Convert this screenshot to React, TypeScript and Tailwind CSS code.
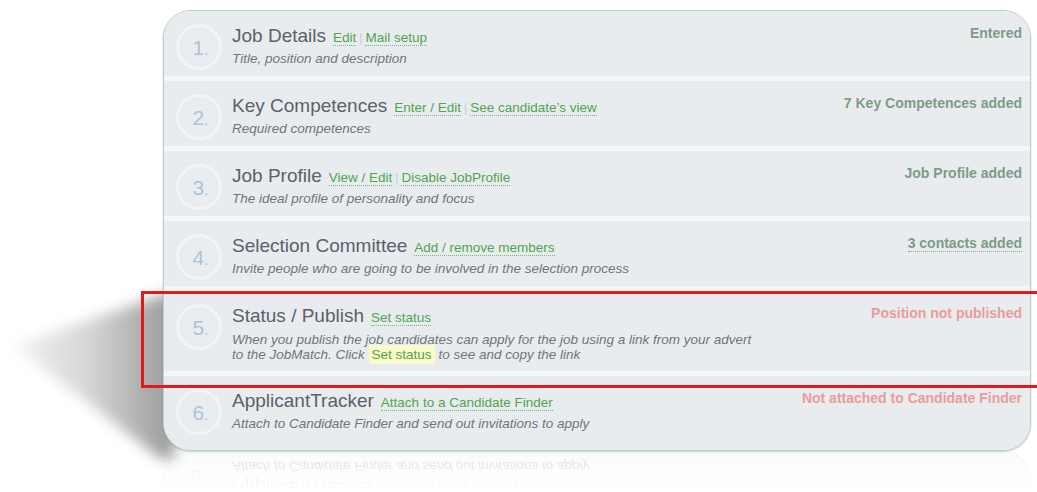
import React from "react";

type Step = {
  n: number;
  title: string;
  links: string[];
  desc?: string;
  status: string;
  tone: "ok" | "bad";
  statusLink?: boolean;
  tall?: boolean;
};

const steps: Step[] = [
  {
    n: 1,
    title: "Job Details",
    links: ["Edit", "Mail setup"],
    desc: "Title, position and description",
    status: "Entered",
    tone: "ok",
  },
  {
    n: 2,
    title: "Key Competences",
    links: ["Enter / Edit", "See candidate’s view"],
    desc: "Required competences",
    status: "7 Key Competences added",
    tone: "ok",
  },
  {
    n: 3,
    title: "Job Profile",
    links: ["View / Edit", "Disable JobProfile"],
    desc: "The ideal profile of personality and focus",
    status: "Job Profile added",
    tone: "ok",
  },
  {
    n: 4,
    title: "Selection Committee",
    links: ["Add / remove members"],
    desc: "Invite people who are going to be involved in the selection process",
    status: "3 contacts added",
    tone: "ok",
    statusLink: true,
  },
  {
    n: 5,
    title: "Status / Publish",
    links: ["Set status"],
    status: "Position not published",
    tone: "bad",
    tall: true,
  },
  {
    n: 6,
    title: "ApplicantTracker",
    links: ["Attach to a Candidate Finder"],
    desc: "Attach to Candidate Finder and send out invitations to apply",
    status: "Not attached to Candidate Finder",
    tone: "bad",
  },
];

function StepLink({ children }: { children: React.ReactNode }) {
  return (
    <a className="text-[#4fa54f] border-b border-dotted border-[#74b974] leading-[14px] cursor-pointer">
      {children}
    </a>
  );
}

function NumberBadge({ n }: { n: number }) {
  return (
    <div className="mt-[13px] ml-[12px] w-[46px] h-[46px] shrink-0 rounded-full border-[3px] border-[#f2f4f6] bg-[#eaedf0] flex items-center justify-center">
      <span className="text-[21px] leading-none text-[#aec3d9] pl-[3px]">
        {n}
        <span className="text-[16px]">.</span>
      </span>
    </div>
  );
}

function StepBody({ step }: { step: Step }) {
  return (
    <div className="flex-1 pl-[10px] pt-[14px]">
      <div className="flex items-baseline">
        <span className="text-[19px] leading-[22px] text-[#5a616b]">{step.title}</span>
        <span className="ml-[7px] text-[13.5px]">
          {step.links.map((l, i) => (
            <React.Fragment key={l}>
              {i > 0 && <span className="mx-[3px] text-[#c3ccd4] text-[12px]">|</span>}
              <StepLink>{l}</StepLink>
            </React.Fragment>
          ))}
        </span>
      </div>
      {step.tall ? (
        <p className="mt-[4px] text-[13.5px] leading-[15px] italic text-[#6f757d]">
          When you publish the job candidates can apply for the job using a link from your advert
          <br />
          to the JobMatch. Click{" "}
          <span className="not-italic bg-[#fbfaca] px-[3px] py-[2px] text-[#4fa54f]">Set status</span>{" "}
          to see and copy the link
        </p>
      ) : (
        <p className="mt-[3px] text-[13.5px] leading-[16px] italic text-[#6f757d]">{step.desc}</p>
      )}
    </div>
  );
}

function StepRow({ step }: { step: Step }) {
  const color = step.tone === "ok" ? "text-[#7c9c88]" : "text-[#e89c9c]";
  const height = step.tall ? "h-[80px]" : step.n === 6 ? "h-[74px]" : "h-[65px]";
  return (
    <div className={`flex bg-[#e9ecef] ${height}`}>
      <NumberBadge n={step.n} />
      <StepBody step={step} />
      <div className={`pt-[12px] pr-[8px] text-[14px] leading-[20px] font-bold whitespace-nowrap ${color}`}>
        {step.statusLink ? (
          <span className="border-b border-dotted border-[#8aa995]">{step.status}</span>
        ) : (
          step.status
        )}
      </div>
    </div>
  );
}

export default function App() {
  const last = steps[steps.length - 1];
  return (
    <div
      className="relative w-[1037px] h-[492px] overflow-hidden bg-white"
      style={{ fontFamily: '"Liberation Sans", Arial, sans-serif' }}
    >
      {/* cast shadow on the left */}
      <div className="absolute left-0 top-[270px] w-[175px] h-[210px] blur-[7px]">
        <div className="w-full h-full bg-gradient-to-r from-[rgba(0,0,0,0.03)] via-[rgba(0,0,0,0.16)] to-[rgba(0,0,0,0.4)] [clip-path:polygon(100%_10%,8%_36%,92%_90%,100%_90%)]" />
      </div>

      <div className="relative z-10 ml-[163px] mt-[10px] w-[868px]">
        <div className="rounded-[28px] border border-[#bccfcf] bg-[#f4f6f8] overflow-hidden shadow-[0_1px_2px_rgba(90,110,110,0.35)]">
          <div className="flex flex-col gap-[5px]">
            {steps.map((s) => (
              <StepRow key={s.n} step={s} />
            ))}
          </div>
        </div>

        {/* reflection under the card */}
        <div className="h-[40px] overflow-hidden opacity-[0.28] [mask-image:linear-gradient(to_bottom,black,transparent)]">
          <div className="scale-y-[-1] h-[48px] rounded-b-[28px] border border-t-0 border-[#bccfcf] bg-[#eef1f3] flex">
            <div className="ml-[12px] -mt-[2px] w-[46px] h-[46px] shrink-0 rounded-full border-[3px] border-[#f3f5f7] flex items-center justify-center">
              <span className="text-[21px] leading-none text-[#aec3d9]">{last.n}.</span>
            </div>
            <div className="pl-[10px]">
              <span className="text-[19px] leading-[22px] text-[#5a616b]">{last.title}</span>
              <span className="ml-[7px] text-[13.5px] text-[#4fa54f]">{last.links[0]}</span>
              <p className="mt-[1px] text-[13.5px] leading-[16px] italic text-[#6f757d]">{last.desc}</p>
            </div>
          </div>
        </div>
      </div>

      {/* highlight frame around the publish step */}
      <div className="absolute z-20 left-[141px] top-[291px] w-[920px] h-[97px] border-[3px] border-[#e01b1d]" />
    </div>
  );
}
